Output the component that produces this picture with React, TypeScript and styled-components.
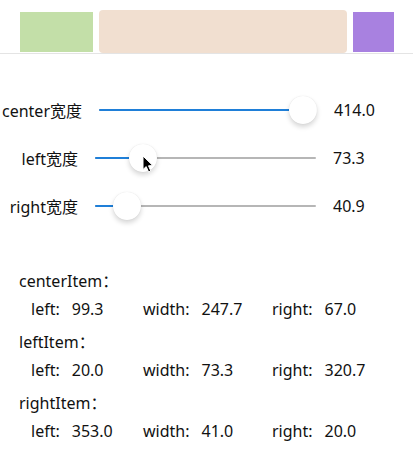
import styled, { createGlobalStyle } from "styled-components";

// 상단 아이템 데이터
const ITEMS = {
    left: { left: 20.0, width: 73.3, right: 320.7 },
    center: { left: 99.3, width: 247.7, right: 67.0 },
    right: { left: 353.0, width: 41.0, right: 20.0 },
};

// 슬라이더 데이터
const SLIDERS = [
    { label: "center宽度", value: "414.0", ratio: 1, labelWidth: 82, trackWidth: 218 },
    { label: "left宽度", value: "73.3", ratio: 0.176, labelWidth: 78, trackWidth: 221 },
    { label: "right宽度", value: "40.9", ratio: 0.093, labelWidth: 78, trackWidth: 221 },
];

const GROUPS = [
    { name: "centerItem", item: ITEMS.center },
    { name: "leftItem", item: ITEMS.left },
    { name: "rightItem", item: ITEMS.right },
];

const THUMB = 28;

const Slider = ({ width, ratio }: { width: number; ratio: number }) => {
    const pos = THUMB / 2 + ratio * (width - THUMB);
    return (
        <Track $w={width}>
            <Fill style={{ width: pos }} />
            <Thumb style={{ left: pos - THUMB / 2 }} />
        </Track>
    );
};

const App = () => {
    return (
        <Page>
            <GlobalStyle />
            {/* 상단 컬러 박스 */}
            <TopBar>
                <Box $w={ITEMS.left.width} $color="#c3dfa8" />
                <Box $w={ITEMS.center.width} $color="#f1dfd0" $tall />
                <Box $w={ITEMS.right.width} $color="#a881e0" />
            </TopBar>

            {/* 슬라이더 */}
            <SliderList>
                {SLIDERS.map((s) => (
                    <SliderRow key={s.label}>
                        <SliderLabel $w={s.labelWidth}>{s.label}</SliderLabel>
                        <Slider width={s.trackWidth} ratio={s.ratio} />
                        <SliderValue>{s.value}</SliderValue>
                    </SliderRow>
                ))}
            </SliderList>

            {/* 아이템 정보 */}
            <InfoList>
                {GROUPS.map((g) => (
                    <Group key={g.name}>
                        <GroupTitle>{g.name}：</GroupTitle>
                        <StatRow>
                            <Stat>
                                <span>left:</span>
                                <span>{g.item.left.toFixed(1)}</span>
                            </Stat>
                            <Stat>
                                <span>width:</span>
                                <span>{g.item.width.toFixed(1)}</span>
                            </Stat>
                            <Stat>
                                <span>right:</span>
                                <span>{g.item.right.toFixed(1)}</span>
                            </Stat>
                        </StatRow>
                    </Group>
                ))}
            </InfoList>

            {/* 마우스 커서 */}
            <Cursor width="12" height="18" viewBox="0 0 12 18">
                <path
                    d="M1 1 L1 14.5 L4.2 11.6 L6.6 17 L8.8 16 L6.5 10.8 L10.8 10.6 Z"
                    fill="#000"
                    stroke="#fff"
                    strokeWidth="1"
                    strokeLinejoin="round"
                />
            </Cursor>
        </Page>
    );
};

export default App;

// 스타일 컴포넌트
const GlobalStyle = createGlobalStyle`
    body {
        margin: 0;
        background: #fff;
        font-family: "Noto Sans", "Noto Sans CJK SC", sans-serif;
        color: #111;
    }
`;

const Page = styled.div`
    position: relative;
    width: 413px;
    height: 455px;
    overflow: hidden;
    background: #fff;
`;

const TopBar = styled.div`
    display: flex;
    align-items: center;
    gap: 6px;
    height: 43px;
    padding: 10px 0 0 20px;
    border-bottom: 1px solid #e4e4e4;
`;

const Box = styled.div<{ $w: number; $color: string; $tall?: boolean }>`
    width: ${(p) => p.$w}px;
    height: ${(p) => (p.$tall ? 43 : 40)}px;
    background: ${(p) => p.$color};
    border-radius: ${(p) => (p.$tall ? "4px" : "0")};
    flex-shrink: 0;
`;

const SliderList = styled.div`
    display: flex;
    flex-direction: column;
    padding-top: 32px;
`;

const SliderRow = styled.div`
    display: flex;
    align-items: center;
    gap: 17px;
    height: 48px;
    font-size: 16px;
`;

const SliderLabel = styled.div<{ $w: number }>`
    display: flex;
    justify-content: flex-end;
    width: ${(p) => p.$w}px;
    white-space: nowrap;
    flex-shrink: 0;
`;

const Track = styled.div<{ $w: number }>`
    position: relative;
    width: ${(p) => p.$w}px;
    height: 2px;
    background: #b6b6b6;
    border-radius: 1px;
    flex-shrink: 0;
`;

const Fill = styled.div`
    height: 100%;
    background: #1f7fd8;
    border-radius: 1px;
`;

const Thumb = styled.div`
    position: absolute;
    top: -13px;
    width: 28px;
    height: 28px;
    border-radius: 50%;
    background: #fff;
    box-shadow: 0 3px 5px rgba(0, 0, 0, 0.16), 0 0 1px rgba(0, 0, 0, 0.12);
`;

const SliderValue = styled.div`
    white-space: nowrap;
`;

const InfoList = styled.div`
    display: flex;
    flex-direction: column;
    padding: 37px 0 0 19px;
    font-size: 16px;
`;

const Group = styled.div`
    margin-bottom: 5px;
`;

const GroupTitle = styled.div`
    line-height: 28px;
`;

const StatRow = styled.div`
    display: grid;
    grid-template-columns: 112px 129px auto;
    padding-left: 12px;
    line-height: 28px;
`;

const Stat = styled.div`
    display: flex;
    gap: 12px;
`;

const Cursor = styled.svg`
    position: absolute;
    left: 142px;
    top: 155px;
`;
